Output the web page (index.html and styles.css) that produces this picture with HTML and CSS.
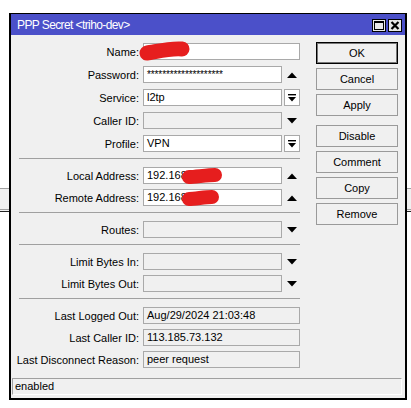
FILE: index.html
```html
<!DOCTYPE html>
<html>
<head>
  <title>PPP Secret</title>
  <link rel="stylesheet" href="styles.css">
</head>
<body>

<div class="window">
  <!-- Title bar -->
  <div class="titlebar">
    <span class="title">PPP Secret &lt;triho-dev&gt;</span>
    <div class="title-btns">
      <span class="tbtn">
        <svg width="12" height="11" viewBox="0 0 12 11"><rect x="1.5" y="1.5" width="9" height="8" fill="none" stroke="#000" stroke-width="1"/><rect x="1" y="1" width="10" height="2" fill="#000"/></svg>
      </span>
      <span class="tbtn">
        <svg width="12" height="11" viewBox="0 0 12 11"><path d="M2.5 2 L9.5 9 M9.5 2 L2.5 9" stroke="#000" stroke-width="2.2"/></svg>
      </span>
    </div>
  </div>

  <div class="content">
    <!-- Form fields -->
    <div class="form">
      <div class="group first">
        <div class="row">
          <label>Name:</label>
          <div class="field wide white">
            <svg class="scribble name-scribble" width="52" height="20" viewBox="0 0 52 20"><path d="M8 12 C16 11 30 7 43 8" stroke="#e61e1e" stroke-width="15" stroke-linecap="round" fill="none"/></svg>
          </div>
        </div>
        <div class="row">
          <label>Password:</label>
          <div class="field white pw">********************</div>
          <span class="icon"><svg width="10" height="6" viewBox="0 0 10 6"><path d="M0 6 L5 0.5 L10 6 Z" fill="#000"/></svg></span>
        </div>
        <div class="row">
          <label>Service:</label>
          <div class="field white">l2tp</div>
          <span class="icon dd"><svg width="8" height="8" viewBox="0 0 8 8"><rect x="0" y="0" width="8" height="1.4" fill="#000"/><path d="M0 3 L8 3 L4 7.5 Z" fill="#000"/></svg></span>
        </div>
        <div class="row">
          <label>Caller ID:</label>
          <div class="field"></div>
          <span class="icon"><svg width="10" height="6" viewBox="0 0 10 6"><path d="M0 0 L10 0 L5 5.5 Z" fill="#000"/></svg></span>
        </div>
        <div class="row">
          <label>Profile:</label>
          <div class="field white">VPN</div>
          <span class="icon dd"><svg width="8" height="8" viewBox="0 0 8 8"><rect x="0" y="0" width="8" height="1.4" fill="#000"/><path d="M0 3 L8 3 L4 7.5 Z" fill="#000"/></svg></span>
        </div>
      </div>

      <div class="sep"></div>

      <div class="group">
        <div class="row">
          <label>Local Address:</label>
          <div class="field white">192.168
            <svg class="scribble addr-scribble" width="42" height="18" viewBox="0 0 42 18"><path d="M8 10 C14 10 26 8 34 8" stroke="#e61e1e" stroke-width="14" stroke-linecap="round" fill="none"/></svg>
          </div>
          <span class="icon"><svg width="10" height="6" viewBox="0 0 10 6"><path d="M0 6 L5 0.5 L10 6 Z" fill="#000"/></svg></span>
        </div>
        <div class="row">
          <label>Remote Address:</label>
          <div class="field white">192.168
            <svg class="scribble addr-scribble" width="40" height="18" viewBox="0 0 40 18"><path d="M8 10 C14 10 24 8 31 8" stroke="#e61e1e" stroke-width="14" stroke-linecap="round" fill="none"/></svg>
          </div>
          <span class="icon"><svg width="10" height="6" viewBox="0 0 10 6"><path d="M0 6 L5 0.5 L10 6 Z" fill="#000"/></svg></span>
        </div>
      </div>

      <div class="sep"></div>

      <div class="group">
        <div class="row">
          <label>Routes:</label>
          <div class="field"></div>
          <span class="icon"><svg width="10" height="6" viewBox="0 0 10 6"><path d="M0 0 L10 0 L5 5.5 Z" fill="#000"/></svg></span>
        </div>
      </div>

      <div class="sep"></div>

      <div class="group">
        <div class="row">
          <label>Limit Bytes In:</label>
          <div class="field"></div>
          <span class="icon"><svg width="10" height="6" viewBox="0 0 10 6"><path d="M0 0 L10 0 L5 5.5 Z" fill="#000"/></svg></span>
        </div>
        <div class="row">
          <label>Limit Bytes Out:</label>
          <div class="field"></div>
          <span class="icon"><svg width="10" height="6" viewBox="0 0 10 6"><path d="M0 0 L10 0 L5 5.5 Z" fill="#000"/></svg></span>
        </div>
      </div>

      <div class="sep"></div>

      <div class="group">
        <div class="row">
          <label>Last Logged Out:</label>
          <div class="field wide">Aug/29/2024 21:03:48</div>
        </div>
        <div class="row">
          <label>Last Caller ID:</label>
          <div class="field wide">113.185.73.132</div>
        </div>
        <div class="row">
          <label>Last Disconnect Reason:</label>
          <div class="field wide">peer request</div>
        </div>
      </div>
    </div>

    <!-- Action buttons -->
    <div class="actions">
      <button class="default">OK</button>
      <button>Cancel</button>
      <button>Apply</button>
      <button class="spaced">Disable</button>
      <button>Comment</button>
      <button>Copy</button>
      <button>Remove</button>
    </div>
  </div>

  <div class="status">enabled</div>
</div>

</body>
</html>
```

FILE: styles.css
```css
body {
  margin: 0;
  font-family: 'Liberation Sans', Arial, sans-serif;
  font-size: 11px;
  color: #000;
  background: linear-gradient(to bottom,
    #fff 0, #fff 188px,
    #a0a0a0 188px, #a0a0a0 189px,
    #f0f0f0 189px, #f0f0f0 209px,
    #a0a0a0 209px, #a0a0a0 210px,
    #f0f0f0 210px, #f0f0f0 211px,
    #222 211px, #222 212px,
    #fff 212px, #fff 100%);
  height: 408px;
  overflow: hidden;
}
.window {
  position: relative;
  margin: 13px 0 0 9px;
  width: 398px;
  height: 387px;
  box-sizing: border-box;
  border: 2px solid #000;
  border-top-width: 1px;
  background-color: #f0f0f0;
  display: flex;
  flex-direction: column;
}
.titlebar {
  height: 21px;
  background-color: #4b50c9;
  color: #fff;
  display: flex;
  align-items: center;
  padding-left: 6px;
}
.title {
  font-size: 12px;
  letter-spacing: -0.6px;
  flex: 1;
}
.title-btns {
  display: flex;
  gap: 2px;
  margin-right: 3px;
  margin-top: 1px;
}
.tbtn {
  width: 14px;
  height: 13px;
  box-sizing: border-box;
  border: 1px solid #000;
  background-color: #e8e8e8;
  display: flex;
  align-items: center;
  justify-content: center;
}
.content {
  display: flex;
  padding-top: 7px;
}
.form {
  width: 289px;
  padding-top: 1px;
}
.group {
  display: flex;
  flex-direction: column;
  gap: 5px;
}
.group.first {
  gap: 6px;
}
.row {
  display: flex;
  align-items: center;
  height: 17px;
}
.row label {
  width: 128px;
  margin-right: 4px;
  text-align: right;
  white-space: nowrap;
}
.field {
  position: relative;
  width: 139px;
  height: 17px;
  box-sizing: border-box;
  border: 1px solid #a9a9a9;
  background-color: #f0f0f0;
  padding: 0 3px;
  line-height: 15px;
  white-space: nowrap;
}
.field.wide {
  width: 157px;
}
.field.white {
  background-color: #fff;
}
.field.pw {
  font-size: 10px;
  letter-spacing: -0.1px;
}
.icon {
  width: 16px;
  height: 17px;
  margin-left: 2px;
  box-sizing: border-box;
  display: flex;
  align-items: center;
  justify-content: center;
}
.icon.dd {
  border: 1px solid #a9a9a9;
  background-color: #fff;
}
.sep {
  height: 1px;
  background-color: #a0a0a0;
  margin: 6px 0 8px 8px;
}
.scribble {
  position: absolute;
}
.name-scribble {
  left: -5px;
  top: -3px;
}
.addr-scribble {
  left: 37px;
  top: -1px;
}
.actions {
  margin-left: 16px;
  display: flex;
  flex-direction: column;
  gap: 4px;
}
.actions button {
  width: 82px;
  height: 22px;
  font-family: 'Liberation Sans', Arial, sans-serif;
  font-size: 11px;
  color: #000;
  background-color: #f0f0f0;
  border: 1px solid #9a9a9a;
  padding: 0;
}
.actions button.default {
  border: 1px solid #000;
  box-shadow: inset 0 0 0 1px #777;
}
.actions button.spaced {
  margin-top: 5px;
}
.status {
  margin: auto 3px 3px 1px;
  height: 17px;
  box-sizing: border-box;
  border: 1px solid #a0a0a0;
  border-right-color: #fff;
  border-bottom-color: #fff;
  padding-left: 2px;
  line-height: 15px;
}
```
